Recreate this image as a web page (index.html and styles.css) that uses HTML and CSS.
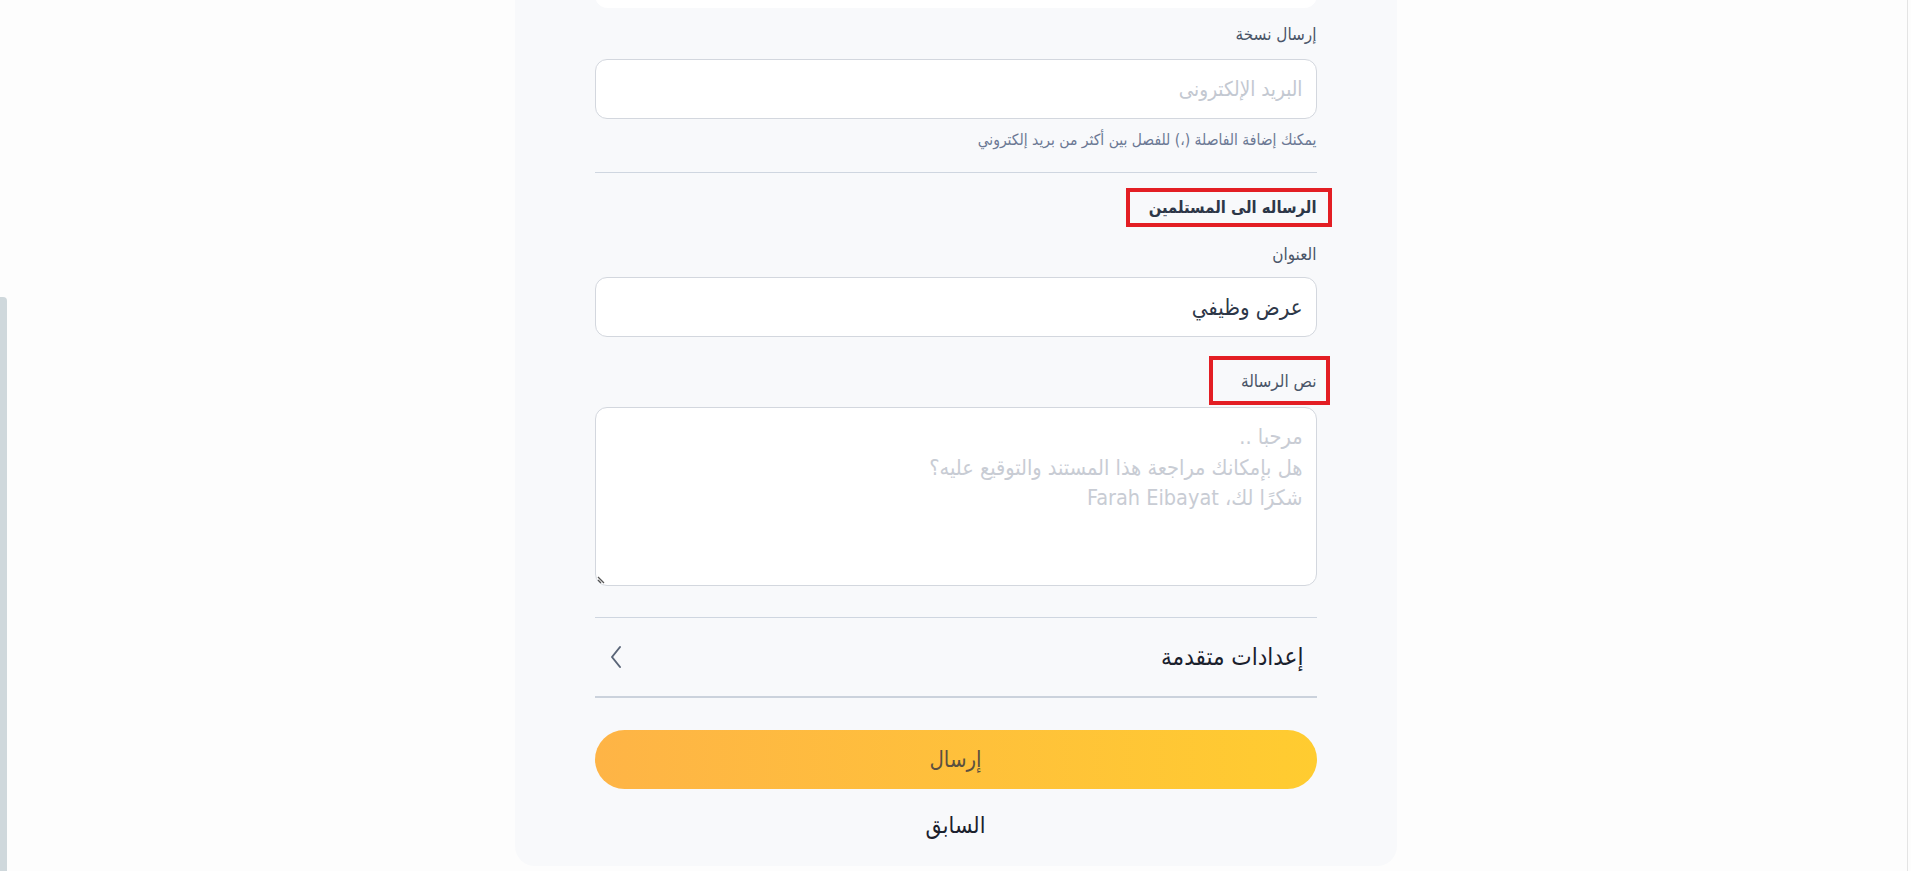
FILE: index.html
```html
<!DOCTYPE html>
<html lang="ar" dir="rtl">
<head>
<meta charset="utf-8">
<title>إرسال</title>
<link rel="stylesheet" href="styles.css">
</head>
<body>
<div class="page">
  <div class="side-thumb"></div>
  <main class="main">
    <section class="card">
      <div class="input input-plain"></div>

      <div class="field">
        <label class="label">إرسال نسخة</label>
        <div class="input"><span class="placeholder">البريد الإلكترونى</span></div>
        <p class="hint">يمكنك إضافة الفاصلة (،) للفصل بين أكثر من بريد إلكتروني</p>
      </div>

      <hr class="divider">

      <div class="heading-row">
        <h2 class="heading marked">الرساله الى المستلمين</h2>
      </div>

      <div class="field field-subject">
        <label class="label">العنوان</label>
        <div class="input"><span class="value">عرض وظيفي</span></div>
      </div>

      <div class="label-row">
        <label class="label marked marked-small">نص الرسالة</label>
      </div>
      <div class="textarea">
        <div class="ta-lines">
          <div>مرحبا ..</div>
          <div>هل بإمكانك مراجعة هذا المستند والتوقيع عليه؟</div>
          <div>شكرًا لك، Farah Eibayat</div>
        </div>
        <svg class="grip" width="10" height="10" viewBox="0 0 10 10"><path d="M1 3 L7 9 M1 6 L4 9" stroke="#555" stroke-width="1.3" fill="none"/></svg>
      </div>

      <hr class="divider divider-mid">

      <div class="advanced">
        <span class="adv-text">إعدادات متقدمة</span>
        <svg class="chev" width="14" height="24" viewBox="0 0 14 24"><path d="M11 2 L3 12 L11 22" stroke="#5a6578" stroke-width="2" fill="none" stroke-linecap="round" stroke-linejoin="round"/></svg>
      </div>

      <hr class="divider divider-thick">

      <button class="send">إرسال</button>
      <div class="prev">السابق</div>
    </section>
  </main>
</div>
</body>
</html>
```

FILE: styles.css
```css
* { box-sizing: border-box; }
html, body {
  margin: 0;
  padding: 0;
  background: #ffffff;
  font-family: "DejaVu Sans Condensed", "DejaVu Sans", sans-serif;
}
.page {
  position: relative;
  width: 1911px;
  height: 871px;
  overflow: hidden;
  display: flex;
  direction: ltr;
  background: #fdfdfd;
}
.side-thumb {
  position: absolute;
  left: 0;
  top: 297px;
  width: 7px;
  height: 580px;
  background: #cfd8dc;
  border-top-right-radius: 4px;
}
.main {
  width: 1908px;
  height: 871px;
  border-right: 1px solid #e4e4e4;
  display: flex;
  justify-content: center;
  padding-left: 4px;
}
.card {
  direction: rtl;
  width: 882px;
  height: 946px;
  margin-top: -80px;
  background: #f8f9fb;
  border-radius: 0 0 20px 20px;
  padding: 28px 80px 0 80px;
  display: flex;
  flex-direction: column;
}
.input {
  height: 60px;
  background: #ffffff;
  border: 1px solid #d3d7de;
  border-radius: 12px;
  display: flex;
  align-items: center;
  padding: 0 13px;
}
.input-plain { border-color: #ffffff; }
.field { display: flex; flex-direction: column; }
.label {
  display: block;
  font-size: 17px;
  color: #4a5568;
  line-height: 22px;
}
.field .label { margin: 15px 0 14px 0; }
.placeholder { font-size: 20.5px; color: #c3c8d1; }
.value { font-size: 22px; color: #2d3748; }
.hint {
  margin: 11px 0 0 0;
  font-size: 15.5px;
  line-height: 20px;
  color: #6b7894;
}
.divider {
  border: 0;
  border-top: 1px solid #cfd6e0;
  margin: 22px 0 0 0;
  height: 0;
}
.heading-row { display: flex; margin-top: 15px; }
.heading {
  margin: 0;
  font-size: 16.5px;
  font-weight: bold;
  color: #2d3748;
  line-height: 23px;
}
.marked {
  border: 4px solid #e31e24;
  padding: 4px 11px 4px 19px;
  margin-right: -15px;
}
.field-subject .label { margin: 16px 0 12px 0; }
.label-row { display: flex; margin-top: 19px; }
.marked-small {
  padding: 10px 9px 9px 28px;
  margin-right: -13px;
}
.textarea {
  position: relative;
  margin-top: 2px;
  height: 179px;
  background: #ffffff;
  border: 1px solid #d3d7de;
  border-radius: 12px;
  padding: 14px 13px 0 13px;
}
.ta-lines {
  font-size: 21.5px;
  line-height: 30.5px;
  color: #c8ccd4;
}
.grip {
  position: absolute;
  left: 1px;
  bottom: 1px;
}
.divider-mid { margin-top: 31px; }
.advanced {
  height: 78px;
  display: flex;
  align-items: center;
  justify-content: space-between;
  padding: 0 13px 0 14px;
}
.adv-text { font-size: 24px; color: #1a202c; }
.divider-thick {
  margin: 0;
  border-top: 2px solid #cbd2dc;
}
.send {
  margin-top: 32px;
  height: 59px;
  width: 100%;
  border: 0;
  border-radius: 30px;
  background: linear-gradient(90deg, #feb446 0%, #ffcc30 100%);
  font-family: inherit;
  font-size: 22px;
  color: #5b5040;
}
.prev {
  margin-top: 20px;
  text-align: center;
  font-size: 23px;
  line-height: 32px;
  color: #1a202c;
}
```
